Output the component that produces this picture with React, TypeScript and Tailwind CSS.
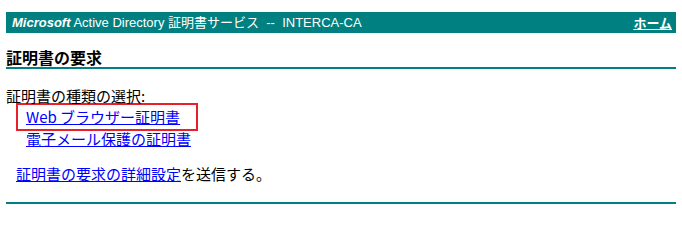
import React from 'react';

const jp = '"Noto Sans CJK JP", sans-serif';
const head = '"Liberation Sans", "Noto Sans CJK JP", sans-serif';

export default function App() {
  return (
    <div className="w-[682px] h-[214px] bg-white px-[6px] pt-[12px] text-black" style={{ fontFamily: jp }}>
      {/* banner */}
      <div className="flex h-[21px] items-center justify-between bg-[#008080] pl-[6px] pr-[4px] text-[13px] text-white">
        <span className="whitespace-pre" style={{ fontFamily: head }}>
          <span className="font-bold italic">Microsoft</span> Active Directory 証明書サービス  --  INTERCA-CA
        </span>
        <a href="#" className="font-bold text-white underline">ホーム</a>
      </div>

      <div className="mt-[14px] border-b-2 border-[#008080] text-[16px] font-bold leading-[20px]">証明書の要求</div>

      <div className="mt-[19px] text-[15px] leading-[15px]">証明書の種類の選択:</div>

      <div className="ml-[10px] w-[182px] border-2 border-[#e8202a] pl-[8px] text-[15px] leading-[24px]">
        <a href="#" className="text-[#0000ff] underline">Web ブラウザー証明書</a>
      </div>
      <div className="ml-[20px] text-[15px] leading-[16px]">
        <a href="#" className="text-[#0000ff] underline">電子メール保護の証明書</a>
      </div>

      <div className="mt-[19px] ml-[10px] text-[15px] leading-[16px]">
        <a href="#" className="text-[#0000ff] underline">証明書の要求の詳細設定</a>を送信する。
      </div>

      <div className="mt-[20px] h-[2px] bg-[#008080]" />
    </div>
  );
}
